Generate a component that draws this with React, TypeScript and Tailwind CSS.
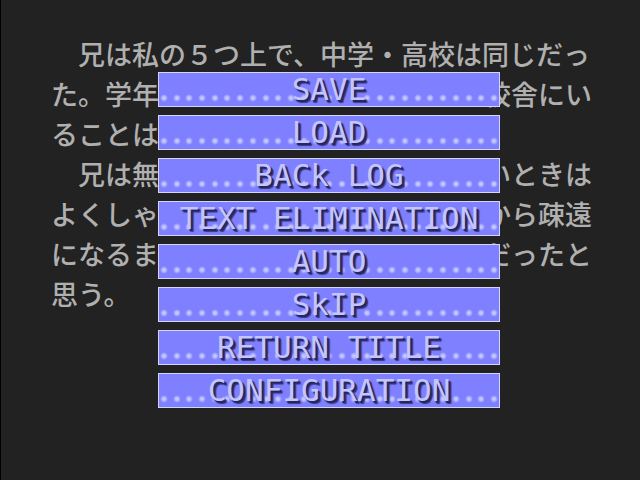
// Each line is split where the menu covers it
const story = [
  ["　兄は私の５つ上で、中学・高校は同じだっ"],
  ["た。学年", "校舎にい"],
  ["ることは"],
  ["　兄は無", "いときは"],
  ["よくしゃ", "から疎遠"],
  ["になるま", "だったと"],
  ["思う。"],
];

const menuItems = [
  "SAVE",
  "LOAD",
  "BACk LOG",
  "TEXT ELIMINATION",
  "AUTO",
  "SkIP",
  "RETURN TITLE",
  "CONFIGURATION",
];

const DOTS = 27;

function DottedLine() {
  return (
    <span aria-hidden="true" className="absolute inset-x-0 bottom-1 flex justify-between px-px">
      {Array.from({ length: DOTS }, (_, i) => (
        <span
          key={i}
          className="h-2 w-2 bg-[radial-gradient(circle,#c6c9ff_20%,#a2a5ff_45%,transparent_70%)]"
        />
      ))}
    </span>
  );
}

function MenuButton({ label }: { label: string }) {
  return (
    <button
      type="button"
      className="relative h-[35px] w-full border border-[#d4d4fa] bg-[#7f80ff] hover:bg-[#8f90ff]"
    >
      <DottedLine />
      <span className="relative block whitespace-pre text-center font-['DejaVu_Sans_Mono',monospace] text-[31px] leading-[33px] text-[#c4c5ff] [text-shadow:2px_2px_1px_#24255c,3px_3px_1px_#3c3d86]">
        {label}
      </span>
    </button>
  );
}

export default function App() {
  return (
    <main className="relative min-h-screen border-l border-black bg-[#222222]">
      <div className="pl-[50px] pr-12 pt-[34px] font-['Noto_Sans_CJK_JP',sans-serif] text-[27px] font-medium leading-[40px] text-[#b0b0b0]">
        {story.map((parts) => (
          <p key={parts[0]} className="flex justify-between whitespace-pre">
            {parts.map((part) => (
              <span key={part}>{part}</span>
            ))}
          </p>
        ))}
      </div>

      <nav
        aria-label="Game menu"
        className="absolute inset-x-0 top-[72px] flex flex-col gap-2 pl-[157px] pr-[140px]"
      >
        {menuItems.map((label) => (
          <MenuButton key={label} label={label} />
        ))}
      </nav>
    </main>
  );
}
